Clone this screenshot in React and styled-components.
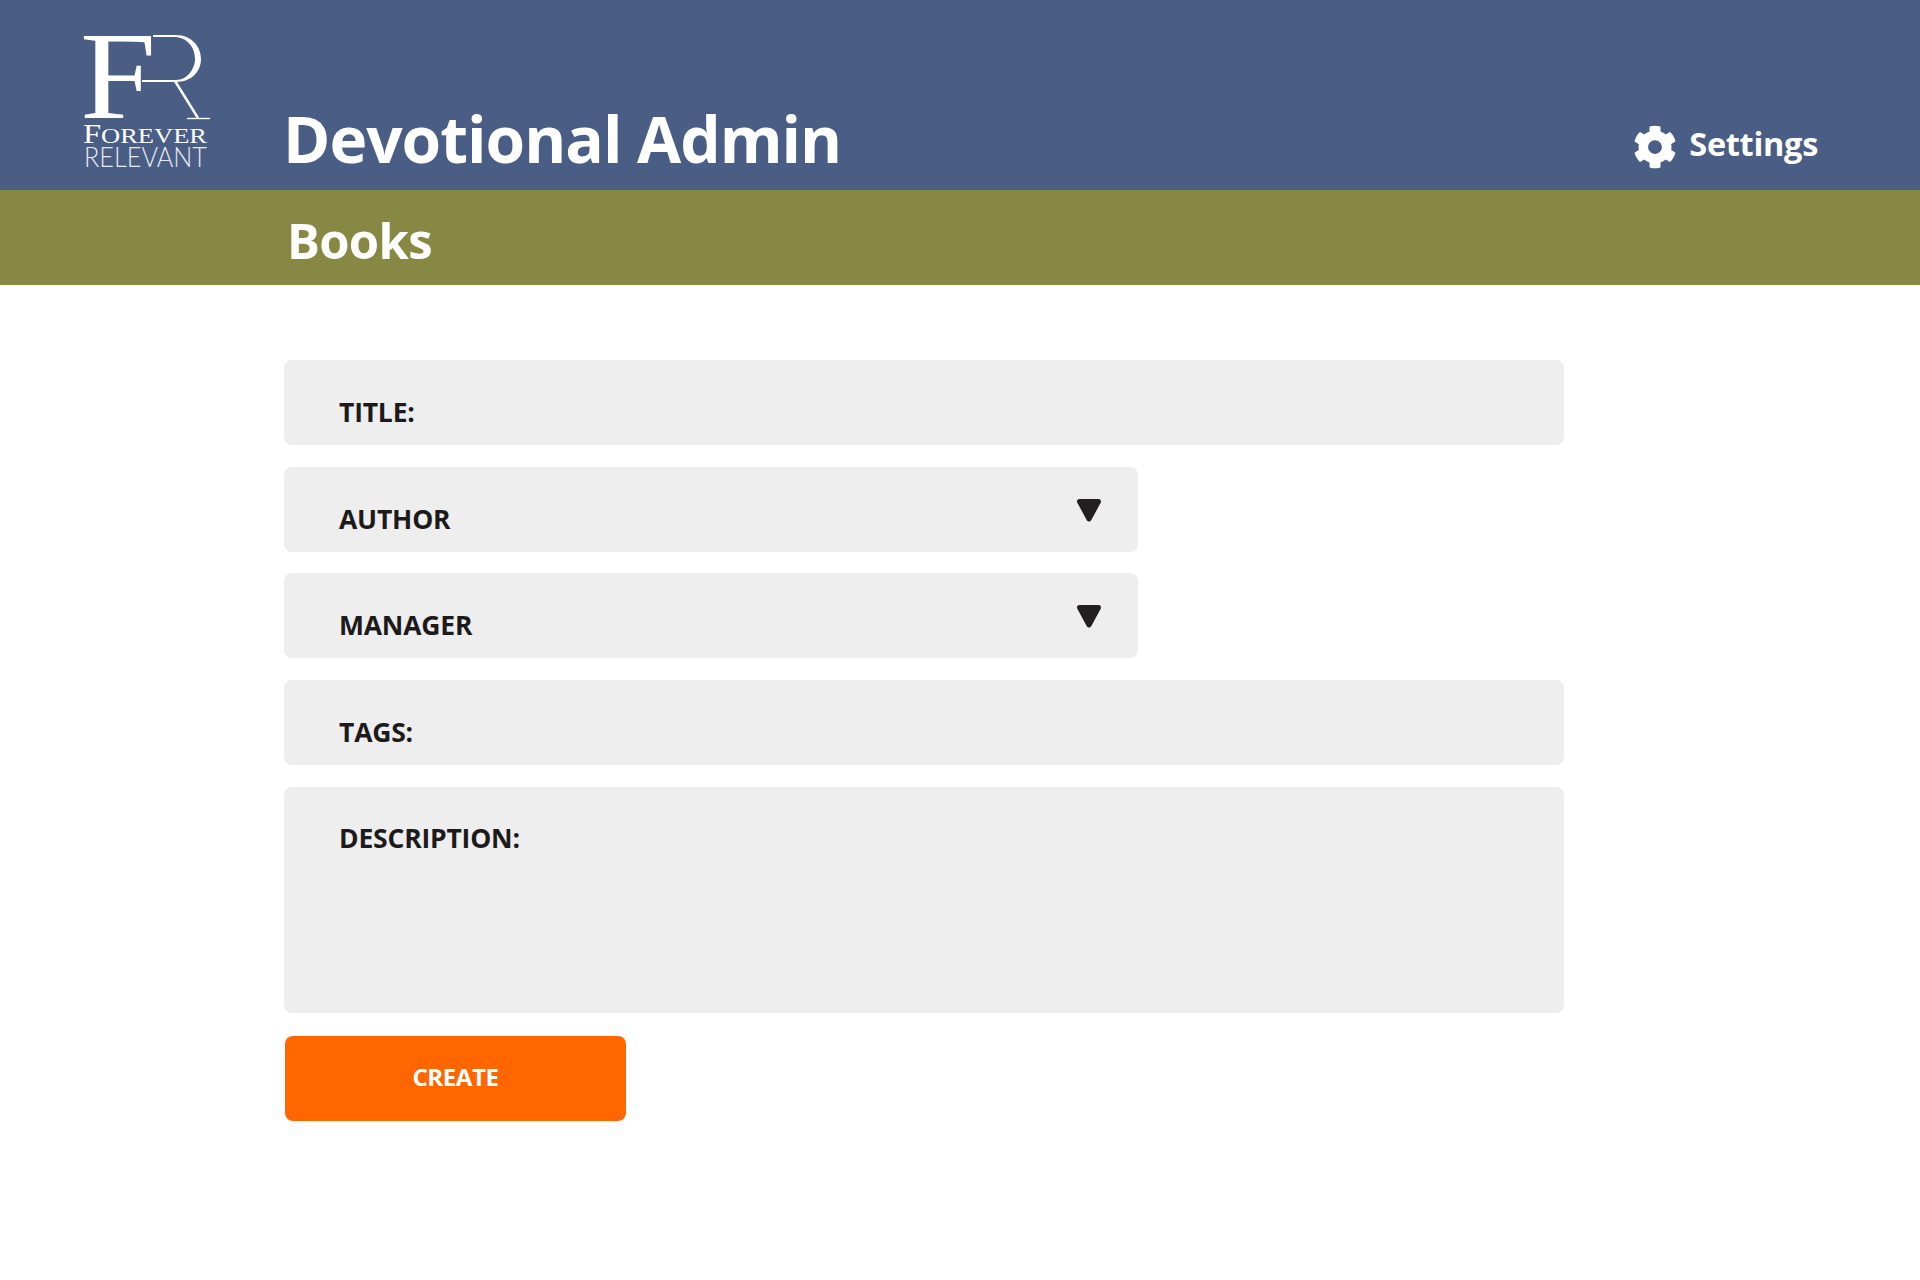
import React from "react";
import styled, { createGlobalStyle } from "styled-components";
import { FaCog } from "react-icons/fa";

const Global = createGlobalStyle`
  html, body { margin: 0; padding: 0; background: #fff; }
  body { font-family: "Open Sans", "Noto Sans", sans-serif; }
`;
const Page = styled.div`width: 1920px; height: 1280px; background: #fff; overflow: hidden;`;
const Header = styled.header`
  height: 190px; background: #4a5d85; color: #fff;
  display: flex; align-items: flex-start; padding: 0 102px 0 76px; box-sizing: border-box;
`;
const LogoBox = styled.div`width: 207px; flex: none; height: 190px; padding-top: 1px; box-sizing: border-box;`;
const Title = styled.h1`
  margin: 0; padding-top: 97px; font-size: 64px; line-height: 84px; font-weight: 700; letter-spacing: -1px;
  flex: 1; white-space: nowrap;
`;
const SettingsLink = styled.div`
  display: flex; align-items: flex-start; gap: 12px; padding-top: 121px;
  font-size: 32.5px; line-height: 46px; font-weight: 700; letter-spacing: -0.3px;
`;
const Gear = styled(FaCog)`margin-top: 4px; flex: none;`;
const SubBar = styled.div`
  height: 95px; background: #878843; color: #fff; display: flex; align-items: center;
  padding: 0 0 0 287px; box-sizing: border-box;
`;
const SubTitle = styled.h2`margin: 5px 0 0; font-size: 49px; line-height: 60px; font-weight: 700; letter-spacing: -0.7px;`;
const Form = styled.main`
  display: flex; flex-direction: column; align-items: flex-start; gap: 21.7px;
  padding: 75px 0 0 284px;
`;
const Field = styled.div`
  width: ${p => p.$w}px; height: ${p => p.$h || 85}px; background: #eeeeee; border-radius: 8px;
  box-sizing: border-box; padding: ${p => p.$top || 34}px 35px 0 55px;
  display: flex; justify-content: space-between; align-items: flex-start;
`;
const Label = styled.span`
  font-size: 26.5px; line-height: 36px; font-weight: 700; color: #1c1a1b; letter-spacing: -0.2px;
`;
const Caret = styled.svg`width: 28px; height: 26px; margin-top: -4px; display: block;`;
const CreateButton = styled.button`
  width: 341px; height: 85px; margin: 1.5px 0 0 1px; background: #ff6600; color: #fff; border: 0; border-radius: 8px;
  font-family: inherit; font-size: 24px; line-height: 32px; font-weight: 700; letter-spacing: -0.4px; padding: 0 0 2px;
`;

const Logo = () => (
  <svg width="140" height="180" viewBox="-6 -34 140 180" style={{ display: "block" }} aria-label="Forever Relevant">
    <text x="-2" y="83" fontFamily="'Liberation Serif', serif" fontSize="125" fill="#fff" textLength="76" lengthAdjust="spacingAndGlyphs">F</text>
    <path d="M71 0 H94 C110 0 119 12 119 24 C119 36 110 47 94 47 H60 V45 H94 C105 45 113 34 113 24 C113 11 104 2 92 2 H71 Z" fill="#fff" />
    <path d="M93 46 L116 83" fill="none" stroke="#fff" strokeWidth="2.4" />
    <path d="M105 83.5 H128" fill="none" stroke="#fff" strokeWidth="1.4" />
    <text x="1" y="108" fontFamily="'Liberation Serif', serif" fontSize="27" fill="#fff" textLength="124" lengthAdjust="spacingAndGlyphs">F<tspan fontSize="22">OREVER</tspan></text>
    <text x="2" y="132" fontFamily="'Lato', sans-serif" fontWeight="300" fontSize="27" fill="#e6e9f0" textLength="123" lengthAdjust="spacingAndGlyphs">RELEVANT</text>
  </svg>
);

const Triangle = () => (
  <Caret viewBox="0 0 28 26">
    <path d="M4.5 4.5 H23.5 L14 22 Z" fill="#231f20" stroke="#231f20" strokeWidth="5" strokeLinejoin="round" />
  </Caret>
);

export default function App() {
  return (
    <Page>
      <Global />
      <Header>
        <LogoBox><Logo /></LogoBox>
        <Title>Devotional Admin</Title>
        <SettingsLink><Gear size={44} />Settings</SettingsLink>
      </Header>
      <SubBar><SubTitle>Books</SubTitle></SubBar>
      <Form>
        <Field $w={1280}><Label>TITLE:</Label></Field>
        <Field $w={854}><Label>AUTHOR</Label><Triangle /></Field>
        <Field $w={854}><Label>MANAGER</Label><Triangle /></Field>
        <Field $w={1280}><Label>TAGS:</Label></Field>
        <Field $w={1280} $h={226} $top={33}><Label>DESCRIPTION:</Label></Field>
        <CreateButton>CREATE</CreateButton>
      </Form>
    </Page>
  );
}
